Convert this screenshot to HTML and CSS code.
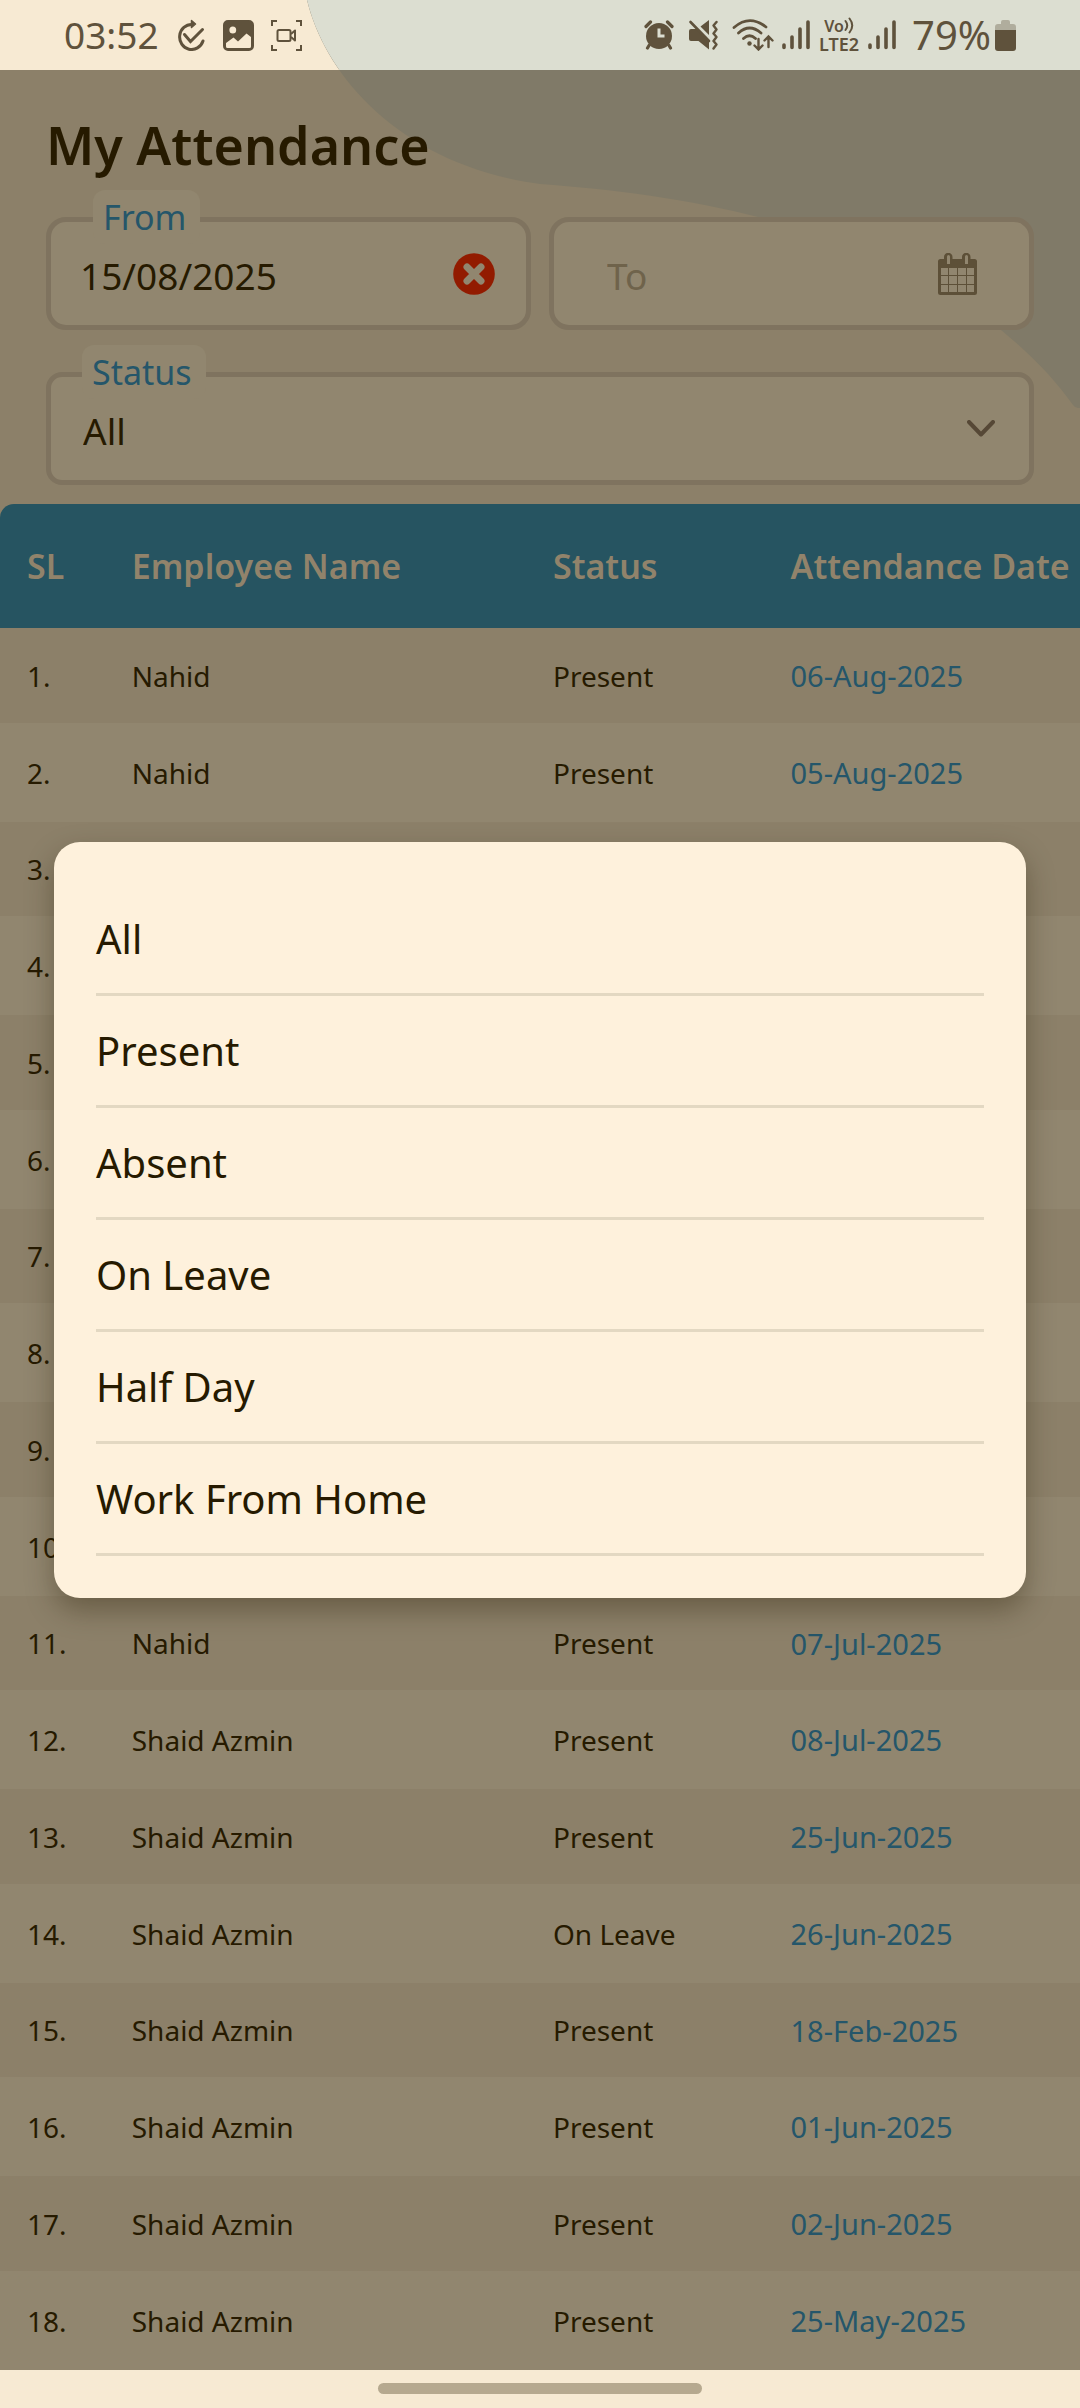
FILE: index.html
```html
<!DOCTYPE html>
<html lang="en">
<head>
<meta charset="utf-8">
<meta name="viewport" content="width=device-width, initial-scale=1">
<title>My Attendance</title>
<link rel="stylesheet" href="styles.css">
</head>
<body>
<div class="screen">
  <svg class="wave" width="780" height="408" viewBox="300 0 780 408" aria-hidden="true">
    <defs>
      <path id="wave-shape" d="M307 0C325 75 400 165 540 184C690 195 865 225 1001 330C1035 358 1055 380 1073 405Q1075 408 1078 408H1080V0Z"/>
      <clipPath id="bar-clip"><rect x="300" y="0" width="780" height="70"/></clipPath>
    </defs>
    <use href="#wave-shape" class="wave-dim"/>
    <use href="#wave-shape" class="wave-light" clip-path="url(#bar-clip)"/>
  </svg>

  <header class="status-bar">
    <div class="status-left">
      <span>03:52</span>
      <svg width="30" height="32" viewBox="0 0 30 32" fill="none" stroke="currentColor" stroke-width="3" stroke-linecap="round" stroke-linejoin="round">
        <path d="M16 5.500A12 12.500 0 1 0 27 22"/>
        <path d="M8.500 15.500l6 7L26.500 10.500" stroke-linejoin="miter"/>
        <path d="M15.500 1.500l4 3.500-4 3.500z" fill="currentColor" stroke-width="1.500"/>
      </svg>
      <svg width="31" height="31" viewBox="0 0 31 31">
        <path fill="currentColor" fill-rule="evenodd" d="M5 0H26a5 5 0 0 1 5 5V26a5 5 0 0 1-5 5H5a5 5 0 0 1-5-5V5A5 5 0 0 1 5 0ZM9.800 6.500a3.400 3.500 0 1 0 0 7a3.400 3.500 0 1 0 0-7ZM3 23V26.500A1.500 1.500 0 0 0 4.500 28H26.500A1.500 1.500 0 0 0 28 26.500V17L23.500 13.500L15 21.500L10.500 17.500Z"/>
      </svg>
      <svg width="31" height="31" viewBox="0 0 31 31" fill="none" stroke="currentColor" stroke-width="2">
        <path d="M1 6V1H6M25 1H30V6M1 25V30H6M25 30H30V25"/>
        <rect x="6.500" y="10" width="13" height="11" rx="1.500"/>
        <path d="M20 14l4-3.500v10L20 17" stroke-linejoin="round"/>
      </svg>
    </div>
    <div class="status-right">
      <div class="status-modes">
        <svg width="30" height="30" viewBox="0 0 30 30">
          <circle cx="15" cy="16" r="13" fill="currentColor"/>
          <path d="M2 6.500L6.500 2M28 6.500L23.500 2M5 25.500L3.500 28M25 25.500L26.500 28" stroke="currentColor" stroke-width="3.200" stroke-linecap="round"/>
          <path class="alarm-hands" d="M15 8.500V16H20.500"/>
        </svg>
        <svg width="30" height="30" viewBox="0 0 30 30">
          <path fill="currentColor" d="M1 11a2 2 0 0 1 2-2H9L21 21V29.500L10.500 21H3a2 2 0 0 1-2-2ZM12.500 6.500L21 0V15Z"/>
          <path d="M2.500 2L21 21" stroke="currentColor" stroke-width="2.600" stroke-linecap="round"/>
          <path d="M28.500 2L25.500 5.500L28.500 9.500L25.500 13.500L28.500 17L25.500 21L28.500 24.500L25.500 28.500" fill="none" stroke="currentColor" stroke-width="2.400" stroke-linejoin="round" stroke-linecap="round"/>
        </svg>
        <svg width="42" height="32" viewBox="0 0 42 32" fill="none" stroke="currentColor" stroke-width="2.800" stroke-linecap="round">
          <path d="M2 8.500Q17.500-5 34 8M6.500 14Q17.500 4 29 14M11.500 19.500Q17.500 14 23.500 19.500"/>
          <circle cx="17.500" cy="24.500" r="2.200" fill="currentColor" stroke="none"/>
          <path d="M26.500 20V30M22.500 26.500L26.500 30.500L30.500 26.500M36.500 28V18M32.500 21.500L36.500 17.500L40.500 21.500" stroke-width="2.400"/>
        </svg>
      </div>
      <svg width="28" height="30" viewBox="0 0 28 30" stroke="currentColor" stroke-width="3.600" stroke-linecap="round">
        <path d="M2 25V27.500M10 17V27.500M18 9V27.500M26 2V27.500"/>
      </svg>
      <div class="volte">
        <span class="volte-top">Vo<svg width="10" height="17" viewBox="0 0 10 17" fill="none" stroke="currentColor" stroke-width="2" stroke-linecap="round"><path d="M1.500 4Q5 8.500 1.500 13M5.500 1.500Q11 8.500 5.500 15.500"/></svg></span>
        <span>LTE2</span>
      </div>
      <svg width="28" height="30" viewBox="0 0 28 30" stroke="currentColor" stroke-width="3.600" stroke-linecap="round">
        <path d="M2 25V27.500M10 17V27.500M18 9V27.500M26 2V27.500"/>
      </svg>
      <div class="battery">
        <span>79%</span>
        <svg width="21" height="31" viewBox="0 0 21 31" fill="currentColor">
          <path opacity="0.350" d="M6 4V2Q6 0 8 0H13Q15 0 15 2V4H18Q21 4 21 7V10H0V7Q0 4 3 4Z"/>
          <path d="M0 10H21V28Q21 31 18 31H3Q0 31 0 28Z"/>
        </svg>
      </div>
    </div>
  </header>

  <main class="page">
    <h1 class="title">My Attendance</h1>
    <form class="filters">
      <div class="field">
        <label class="field-label" for="from">From</label>
        <input class="field-input" id="from" type="text" value="15/08/2025">
        <button class="icon-button" type="button" aria-label="Clear date">
          <svg width="42" height="42" viewBox="0 0 42 42">
            <circle cx="21" cy="21" r="20.800" class="clear-disc"/>
            <path class="clear-cross" d="M14 14L28 28M28 14L14 28"/>
          </svg>
        </button>
      </div>
      <div class="field">
        <input class="field-input field-input-to" id="to" type="text" placeholder="To" aria-label="To">
        <button class="icon-button icon-button-date" type="button" aria-label="Pick date">
          <svg width="39" height="42" viewBox="0 0 39 42">
            <path class="cal-fill" fill-rule="evenodd" d="M2.500 6H6V4a4 4 0 0 1 8.500 0V6H24V4a4 4 0 0 1 8.500 0V6H36.500A2.500 2.500 0 0 1 39 8.500V39.500A2.500 2.500 0 0 1 36.500 42H2.500A2.500 2.500 0 0 1 0 39.500V8.500A2.500 2.500 0 0 1 2.500 6ZM3 15V39H36V15ZM9 3.500V11H12V3.500A1.500 1.500 0 0 0 9 3.500ZM27 3.500V11H30V3.500A1.500 1.500 0 0 0 27 3.500Z"/>
            <path class="cal-grid" d="M10.500 15V39M19.500 15V39M28.500 15V39M3 22.500H36M3 31.500H36"/>
          </svg>
        </button>
      </div>
      <div class="field field-wide">
        <label class="field-label field-label-status" for="status">Status</label>
        <select class="field-input field-select" id="status">
          <option>All</option>
        </select>
        <svg class="chevron" width="28" height="17" viewBox="0 0 28 17"><path d="M2 2L14 14.500L26 2"/></svg>
      </div>
    </form>

    <table class="records">
      <colgroup><col class="col-sl"><col class="col-name"><col class="col-status"><col></colgroup>
      <thead>
        <tr><th>SL</th><th>Employee Name</th><th>Status</th><th>Attendance Date</th></tr>
      </thead>
      <tbody>
        <tr><td>1.</td><td>Nahid</td><td>Present</td><td>06-Aug-2025</td></tr>
        <tr><td>2.</td><td>Nahid</td><td>Present</td><td>05-Aug-2025</td></tr>
        <tr><td>3.</td><td></td><td></td><td></td></tr>
        <tr><td>4.</td><td></td><td></td><td></td></tr>
        <tr><td>5.</td><td></td><td></td><td></td></tr>
        <tr><td>6.</td><td></td><td></td><td></td></tr>
        <tr><td>7.</td><td></td><td></td><td></td></tr>
        <tr><td>8.</td><td></td><td></td><td></td></tr>
        <tr><td>9.</td><td></td><td></td><td></td></tr>
        <tr><td>10.</td><td></td><td></td><td></td></tr>
        <tr><td>11.</td><td>Nahid</td><td>Present</td><td>07-Jul-2025</td></tr>
        <tr><td>12.</td><td>Shaid Azmin</td><td>Present</td><td>08-Jul-2025</td></tr>
        <tr><td>13.</td><td>Shaid Azmin</td><td>Present</td><td>25-Jun-2025</td></tr>
        <tr><td>14.</td><td>Shaid Azmin</td><td>On Leave</td><td>26-Jun-2025</td></tr>
        <tr><td>15.</td><td>Shaid Azmin</td><td>Present</td><td>18-Feb-2025</td></tr>
        <tr><td>16.</td><td>Shaid Azmin</td><td>Present</td><td>01-Jun-2025</td></tr>
        <tr><td>17.</td><td>Shaid Azmin</td><td>Present</td><td>02-Jun-2025</td></tr>
        <tr><td>18.</td><td>Shaid Azmin</td><td>Present</td><td>25-May-2025</td></tr>
      </tbody>
    </table>

    <div class="overlay">
      <div class="dialog" role="dialog" aria-label="Status">
        <button class="option" type="button">All</button>
        <button class="option" type="button">Present</button>
        <button class="option" type="button">Absent</button>
        <button class="option" type="button">On Leave</button>
        <button class="option" type="button">Half Day</button>
        <button class="option" type="button">Work From Home</button>
      </div>
    </div>
  </main>

  <footer class="nav-bar"><div class="nav-handle"></div></footer>
</div>
</body>
</html>
```
FILE: styles.css
```css
:root {
  --ink: #261a00;
  --teal: #25566a;
  --page: #8c8069;
  --surface: #91866f;
  --line: #7f735f;
  --bar: #f7ead3;
  --status-ink: #5f523c;
}

* {
  box-sizing: border-box;
}

body {
  margin: 0;
  background: var(--bar);
  color: var(--ink);
  font-family: "Noto Sans", "Open Sans", sans-serif;
}

button,
input,
select {
  margin: 0;
  padding: 0;
  border: 0;
  background: none;
  color: inherit;
  font: inherit;
}

svg {
  display: block;
  flex: none;
}

.screen {
  position: relative;
  isolation: isolate;
  overflow: hidden;
}

/* Decorative wave behind the top of the page */
.wave {
  position: absolute;
  top: 0;
  right: 0;
  z-index: 1;
}

.wave-dim {
  fill: #807a68;
}

.wave-light {
  fill: #dcded1;
}

/* System status bar */
.status-bar {
  position: relative;
  z-index: 2;
  display: flex;
  justify-content: space-between;
  align-items: center;
  height: 70px;
  padding: 0 64px;
  color: var(--status-ink);
  font-size: 37px;
  line-height: 68px;
}

.status-left {
  display: flex;
  align-items: center;
  gap: 17px;
}

.status-right {
  display: flex;
  align-items: center;
  gap: 8px;
}

.status-modes {
  display: flex;
  align-items: center;
  gap: 14px;
}

.alarm-hands {
  fill: none;
  stroke: #dcded1;
  stroke-width: 3;
}

.volte {
  display: flex;
  flex-direction: column;
  align-items: center;
  width: 42px;
  font-size: 18px;
  font-weight: 600;
  line-height: 18px;
}

.volte-top {
  display: flex;
  font-size: 16px;
}

.battery {
  display: flex;
  align-items: center;
  gap: 4px;
  margin-left: 8px;
  font-size: 40px;
}

/* Page */
.page {
  position: relative;
  background: var(--page);
}

.title {
  position: relative;
  z-index: 2;
  margin: 0;
  padding: 35px 46px 32px;
  font-size: 52px;
  font-weight: 600;
  line-height: 80px;
}

.filters {
  position: relative;
  z-index: 2;
  display: grid;
  grid-template-columns: repeat(2, minmax(0, 1fr));
  gap: 42px 18px;
  padding: 0 46px 19px;
}

.field {
  position: relative;
  display: flex;
  align-items: center;
  height: 113px;
  padding-right: 31px;
  border: 5px solid var(--line);
  border-radius: 20px;
  background: var(--surface);
}

.field-wide {
  grid-column: 1 / -1;
  border-radius: 16px;
}

.field-label {
  position: absolute;
  top: -32px;
  left: 42px;
  padding: 0 14px 0 10px;
  border-radius: 12px;
  background: var(--surface);
  color: var(--teal);
  font-size: 34px;
  line-height: 54px;
}

.field-label-status {
  left: 31px;
}

.field-input {
  flex: 1;
  min-width: 0;
  height: 100%;
  padding-top: 4px;
  padding-left: 29px;
  font-size: 37px;
}

.field-input-to {
  padding-left: 53px;
}

.field-input::placeholder {
  color: #6f634b;
  opacity: 1;
}

.field-select {
  padding-left: 32px;
  appearance: none;
}

.chevron {
  position: absolute;
  right: 34px;
  fill: none;
  stroke: #564836;
  stroke-width: 4;
  stroke-linecap: round;
  stroke-linejoin: round;
}

.icon-button-date {
  margin-right: 21px;
}

.clear-disc {
  fill: #921b00;
}

.clear-cross {
  stroke: var(--surface);
  stroke-width: 7;
  stroke-linecap: round;
}

.cal-fill {
  fill: #5d5038;
}

.cal-grid {
  fill: none;
  stroke: #5d5038;
  stroke-width: 1;
}

/* Attendance table */
.records {
  position: relative;
  z-index: 2;
  width: 100%;
  border-collapse: separate;
  border-spacing: 0;
  table-layout: fixed;
  font-size: 28px;
  text-align: left;
}

.col-sl {
  width: 9.7%;
}

.col-name {
  width: 39%;
}

.col-status {
  width: 22%;
}

.records th {
  height: 124px;
  padding: 0 0 0 27px;
  background: #265461;
  color: #91836b;
  font-size: 34px;
  font-weight: 600;
  white-space: nowrap;
}

.records th:first-child {
  border-top-left-radius: 14px;
}

.records td {
  height: 99px;
  padding: 0 0 0 27px;
  background: var(--surface);
}

.records tr:nth-child(odd) td {
  height: 94px;
  background: var(--page);
}

.records tr:nth-child(4n + 1) td {
  height: 95px;
}

.records td:last-child {
  color: var(--teal);
  font-size: 29px;
}

/* Status picker */
.overlay {
  position: absolute;
  inset: 0;
  z-index: 3;
  display: flex;
  align-items: center;
  justify-content: center;
}

.dialog {
  width: 90%;
  padding: 42px;
  border-radius: 26px;
  background: #fef1dc;
  box-shadow: 0 12px 28px rgba(38, 26, 0, 0.35);
}

.option {
  display: block;
  width: 100%;
  height: 112px;
  border-bottom: 3px solid #e3d8c2;
  font-size: 40px;
  text-align: left;
}

/* System navigation bar */
.nav-bar {
  display: flex;
  justify-content: center;
  padding: 13px 0 14px;
  background: var(--bar);
}

.nav-handle {
  width: 30%;
  height: 11px;
  border-radius: 6px;
  background: #b6a98f;
}
```
